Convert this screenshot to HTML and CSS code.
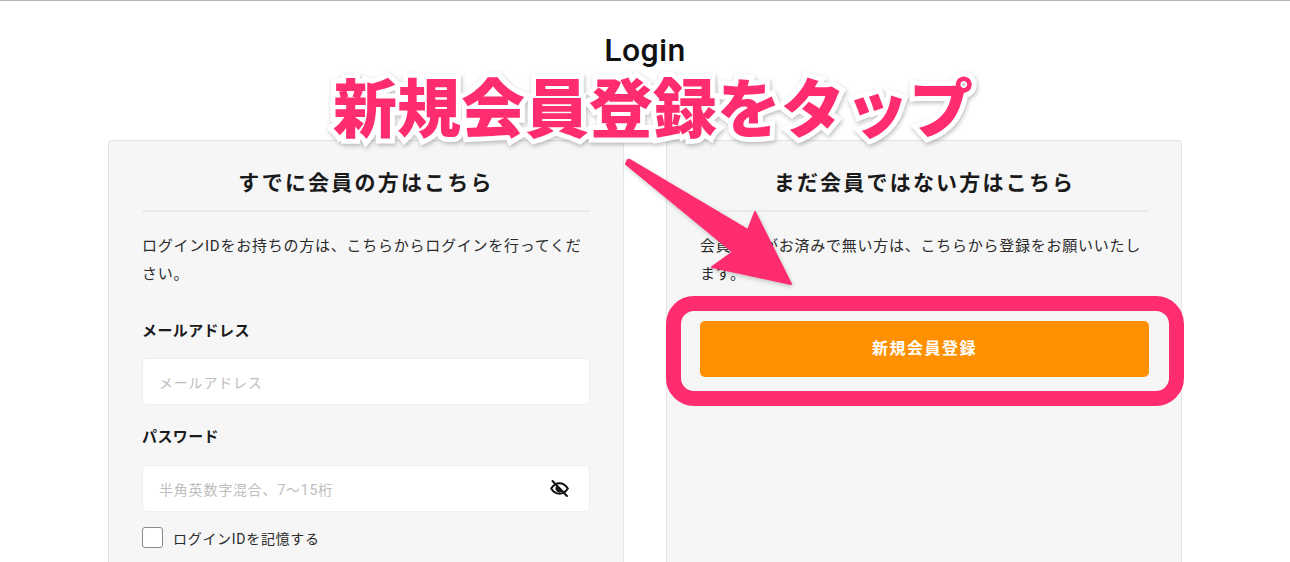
FILE: index.html
```html
<!DOCTYPE html>
<html>

<head>
  <meta charset="UTF-8" />
  <link rel="stylesheet" href="styles.css">
</head>

<body>
  <div class="top-line"></div>
  <h1 class="page-title">Login</h1>

  <div class="columns">
    <section class="card">
      <h2 class="card-title">すでに会員の方はこちら</h2>
      <p class="card-text">ログインIDをお持ちの方は、こちらからログインを行ってください。</p>
      <label class="field-label">メールアドレス</label>
      <div class="input">
        <span class="placeholder">メールアドレス</span>
      </div>
      <label class="field-label second">パスワード</label>
      <div class="input">
        <span class="placeholder">半角英数字混合、7〜15桁</span>
        <svg class="eye" viewBox="0 0 24 24" width="21" height="21" fill="none" stroke="#111" stroke-width="2.3" stroke-linecap="round">
          <path d="M2.500 12c2.500-4 5.700-6 9.500-6s7 2 9.500 6c-2.500 4-5.700 6-9.500 6s-7-2-9.500-6z" />
          <path d="M8.200 9.800a4.500 4.500 0 0 0 6 6z" fill="#111" stroke-width="1" />
          <path d="M4 3.500l16.500 17" />
        </svg>
      </div>
      <div class="remember">
        <span class="checkbox"></span>
        <span class="remember-text">ログインIDを記憶する</span>
      </div>
    </section>

    <section class="card">
      <h2 class="card-title">まだ会員ではない方はこちら</h2>
      <p class="card-text">会員登録がお済みで無い方は、こちらから登録をお願いいたします。</p>
      <div class="register-btn">新規会員登録</div>
    </section>
  </div>

  <!-- 注釈 -->
  <div class="caption">新規会員登録をタップ</div>
  <div class="highlight"></div>
  <svg class="arrow" viewBox="0 0 190 150" width="190" height="150">
    <path d="M5 7 Q5 4 8 5 L126 75 L133 57 L169 129 L90 112 L111 97 L4 9 Z" fill="#ff2d6f" stroke="#ff2d6f" stroke-width="2" stroke-linejoin="round" />
  </svg>
</body>

</html>
```

FILE: styles.css
```css
html,
body {
  margin: 0;
  padding: 0;
}

body {
  position: relative;
  height: 562px;
  overflow: hidden;
  background-color: #fff;
  color: #1a1a1a;
  font-family: "Roboto", "Noto Sans CJK JP", sans-serif;
}

.top-line {
  height: 1px;
  background-color: #b5b5b5;
}

.page-title {
  margin: 32px 0 0;
  height: 34px;
  font-size: 32px;
  line-height: 34px;
  font-weight: 500;
  letter-spacing: 0.4px;
  text-align: center;
  color: #111;
}

.columns {
  display: flex;
  gap: 42px;
  margin: 73px 108px 0;
}

.card {
  box-sizing: border-box;
  width: 516px;
  height: 422px;
  overflow: hidden;
  padding: 0 33px;
  background-color: #f6f6f7;
  border: 1px solid #e3e3e3;
  border-bottom: 0;
  border-radius: 4px 4px 0 0;
}

.card + .card {
  padding-right: 32px;
}

.card-title {
  margin: 0;
  height: 69px;
  font-size: 21px;
  line-height: 84px;
  font-weight: 700;
  letter-spacing: 2.2px;
  text-align: center;
  border-bottom: 2px solid #eaeaea;
  color: #1a1a1a;
}

.card-text {
  margin: 20px 0 0;
  font-size: 15px;
  line-height: 28px;
  letter-spacing: 0.75px;
  color: #2a2a2a;
}

.field-label {
  display: block;
  margin-top: 31px;
  font-size: 15px;
  line-height: 24px;
  font-weight: 700;
  letter-spacing: 0.4px;
  color: #1a1a1a;
}

.field-label.second {
  margin-top: 20px;
}

.input {
  box-sizing: border-box;
  display: flex;
  align-items: center;
  justify-content: space-between;
  height: 47px;
  margin-top: 15px;
  padding: 0 19px 0 16px;
  background-color: #fff;
  border: 1px solid #efefef;
  border-radius: 5px;
}

.field-label.second + .input {
  margin-top: 16px;
}

.placeholder {
  font-size: 14px;
  letter-spacing: 0.8px;
  color: #bdbdbd;
}

.remember {
  display: flex;
  align-items: center;
  gap: 10px;
  margin-top: 15px;
}

.checkbox {
  box-sizing: border-box;
  width: 21px;
  height: 21px;
  background-color: #fff;
  border: 1px solid #8a8a8a;
  border-radius: 3px;
}

.remember-text {
  font-size: 14px;
  letter-spacing: 0.7px;
  color: #2a2a2a;
}

.register-btn {
  height: 56px;
  margin-top: 33px;
  font-size: 16px;
  line-height: 56px;
  font-weight: 700;
  letter-spacing: 1.5px;
  text-align: center;
  color: #fff;
  background-color: #ff9100;
  border-radius: 5px;
}

/* 注釈 */
.caption {
  position: absolute;
  top: 69px;
  left: 0;
  width: 1306px;
  font-size: 64px;
  line-height: 84px;
  font-weight: 900;
  text-align: center;
  white-space: nowrap;
  color: #ff2d6f;
  -webkit-text-stroke: 10px #fff;
  paint-order: stroke fill;
  filter: drop-shadow(1px 2px 2px rgba(0, 0, 0, .25));
}

.highlight {
  position: absolute;
  box-sizing: border-box;
  left: 666px;
  top: 296px;
  width: 518px;
  height: 110px;
  border: 15px solid #ff2d6f;
  border-radius: 28px;
}

.arrow {
  position: absolute;
  left: 622px;
  top: 155px;
  filter: drop-shadow(1px 2px 2px rgba(0, 0, 0, .2));
}
```
